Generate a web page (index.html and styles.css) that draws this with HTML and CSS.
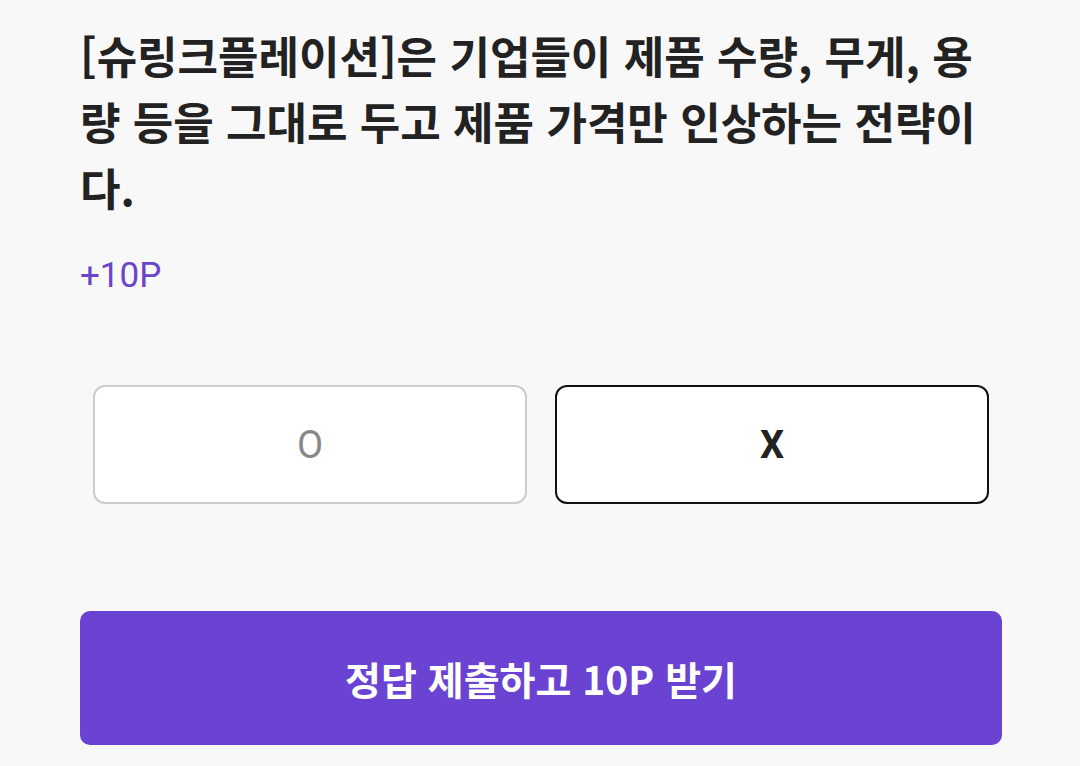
FILE: index.html
```html
<!DOCTYPE html>
<html lang="ko">
<head>
    <meta charset="UTF-8">
    <title>OX 퀴즈</title>
    <link rel="stylesheet" href="styles.css">
</head>
<body>

    <div class="quiz">
        <p class="question">[슈링크플레이션]은 기업들이 제품 수량, 무게, 용량 등을 그대로 두고 제품 가격만 인상하는 전략이다.</p>
        <div class="reward">+10P</div>

        <div class="choices">
            <button class="choice">O</button>
            <button class="choice selected">X</button>
        </div>

        <button class="submit">정답 제출하고 10P 받기</button>
    </div>

</body>
</html>
```

FILE: styles.css
```css
body {
    margin: 0;
    background-color: #f8f8f8;
    color: #222;
    font-family: Roboto, "Noto Sans CJK KR", sans-serif;
}

.quiz {
    width: 922px;
    padding: 22px 0 0 80px;
}

.question {
    margin: 0;
    font-family: "Noto Sans CJK KR", sans-serif;
    font-weight: 700;
    font-size: 44px;
    line-height: 66px;
    color: #222;
}

.reward {
    margin-top: 36px;
    font-size: 35px;
    line-height: 40px;
    color: #6b45c9;
}

.choices {
    display: grid;
    grid-template-columns: 1fr 1fr;
    gap: 28px;
    padding: 0 13px;
    margin-top: 89px;
}

.choice {
    height: 119px;
    background-color: #fff;
    border: 2px solid #ccc;
    border-radius: 12px;
    font-family: Roboto, sans-serif;
    font-size: 38px;
    color: #888;
}

.choice.selected {
    border-color: #111;
    color: #222;
    font-weight: 700;
}

.submit {
    display: block;
    width: 100%;
    height: 134px;
    margin-top: 107px;
    border: none;
    border-radius: 10px;
    background-color: #6a43d3;
    color: #fff;
    font-family: "Noto Sans CJK KR", sans-serif;
    font-weight: 700;
    font-size: 39px;
}
```
